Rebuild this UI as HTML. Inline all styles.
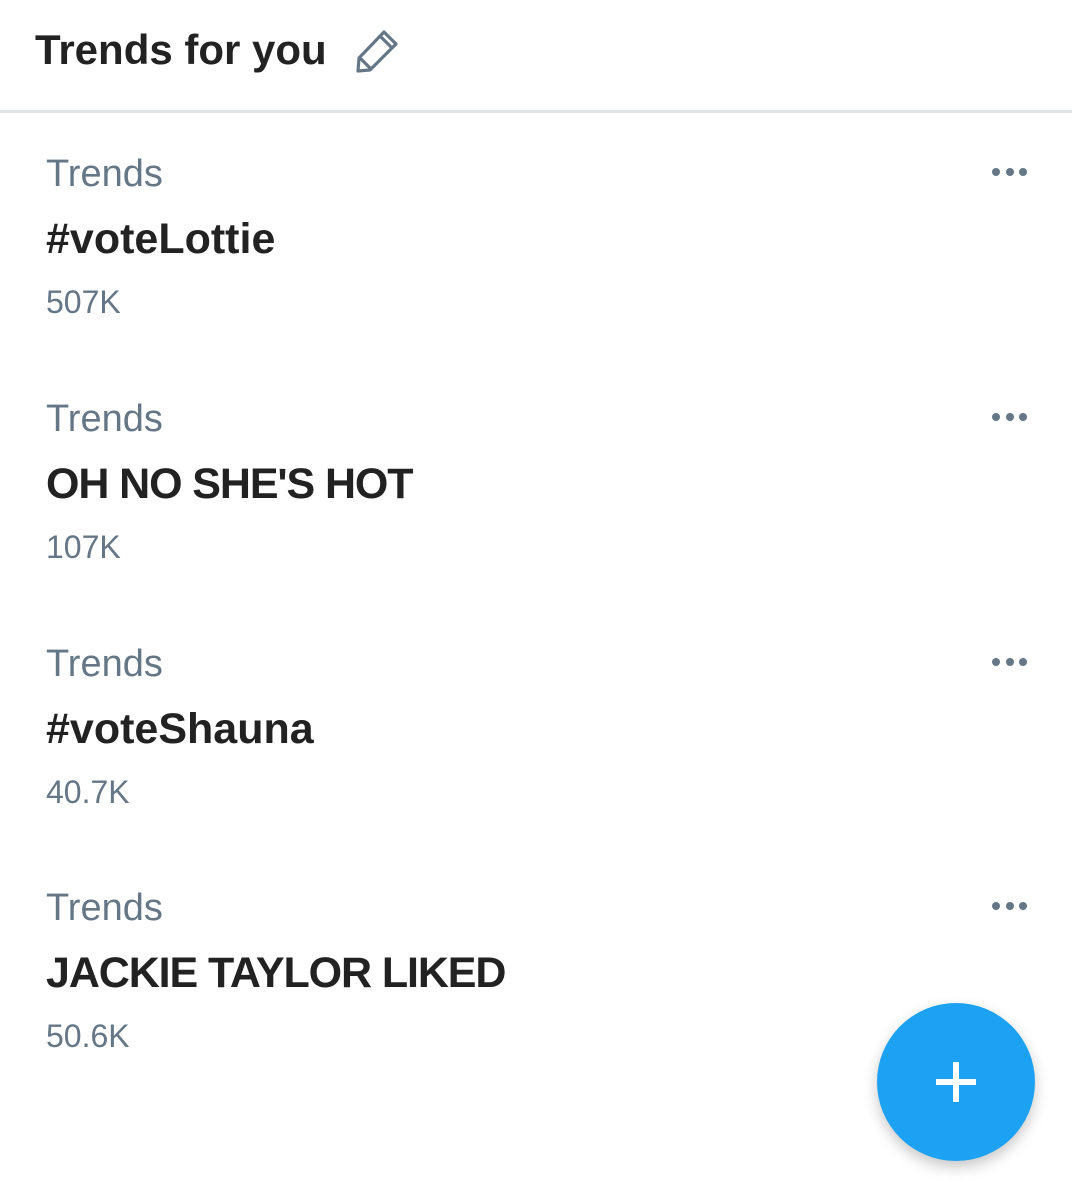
<!DOCTYPE html>
<html><head><style>
body{margin:0;width:1072px;height:1181px;background:#fff;font-family:"Liberation Sans",Arial,sans-serif;position:relative;overflow:hidden}
.h{position:absolute;left:35px;top:22px;font-size:42px;font-weight:bold;color:#222;line-height:56px}
.div{position:absolute;left:0;top:110px;width:1072px;height:3px;background:#e1e4e6}
.row{position:absolute;left:46px;width:1000px}
.l{position:absolute;left:0;top:1px;font-size:38px;color:#657786;line-height:40px;white-space:nowrap}
.t{position:absolute;left:0;top:63px;font-size:43px;font-weight:bold;color:#222;line-height:46px;white-space:nowrap}
.t.cap{letter-spacing:-1.1px}
.c{position:absolute;left:0;top:132px;font-size:32px;color:#657786;line-height:34px;white-space:nowrap}
.d{position:absolute;left:946px;top:10px}
.fab{position:absolute;left:877px;top:1003px;width:158px;height:158px;border-radius:50%;background:#1da1f2;box-shadow:0 6px 14px rgba(0,0,0,.22)}
</style></head><body>
<div class="h">Trends for you</div>
<svg style="position:absolute;left:354px;top:28px" width="46" height="46" viewBox="0 0 46 46"><path d="M30 4 L42 16 L16 42 L4 43 L5 30 Z M26 8 L38 20 M6 30 L17 41" fill="none" stroke="#657786" stroke-width="3.2" stroke-linejoin="round"/></svg>
<div class="div"></div>

<div class="row" style="top:153px"><div class="l">Trends</div><div class="t">#voteLottie</div><div class="c">507K</div><svg class="d" width="40" height="20"><circle cx="4" cy="9" r="4" fill="#657786"/><circle cx="18" cy="9" r="4" fill="#657786"/><circle cx="31" cy="9" r="4" fill="#657786"/></svg></div>
<div class="row" style="top:398px"><div class="l">Trends</div><div class="t cap">OH NO SHE'S HOT</div><div class="c">107K</div><svg class="d" width="40" height="20"><circle cx="4" cy="9" r="4" fill="#657786"/><circle cx="18" cy="9" r="4" fill="#657786"/><circle cx="31" cy="9" r="4" fill="#657786"/></svg></div>
<div class="row" style="top:643px"><div class="l">Trends</div><div class="t">#voteShauna</div><div class="c">40.7K</div><svg class="d" width="40" height="20"><circle cx="4" cy="9" r="4" fill="#657786"/><circle cx="18" cy="9" r="4" fill="#657786"/><circle cx="31" cy="9" r="4" fill="#657786"/></svg></div>
<div class="row" style="top:887px"><div class="l">Trends</div><div class="t cap">JACKIE TAYLOR LIKED</div><div class="c">50.6K</div><svg class="d" width="40" height="20"><circle cx="4" cy="9" r="4" fill="#657786"/><circle cx="18" cy="9" r="4" fill="#657786"/><circle cx="31" cy="9" r="4" fill="#657786"/></svg></div>

<div class="fab"><svg width="158" height="158"><path d="M59 79 H99 M79 59 V99" stroke="#fff" stroke-width="6"/></svg></div>
</body></html>
